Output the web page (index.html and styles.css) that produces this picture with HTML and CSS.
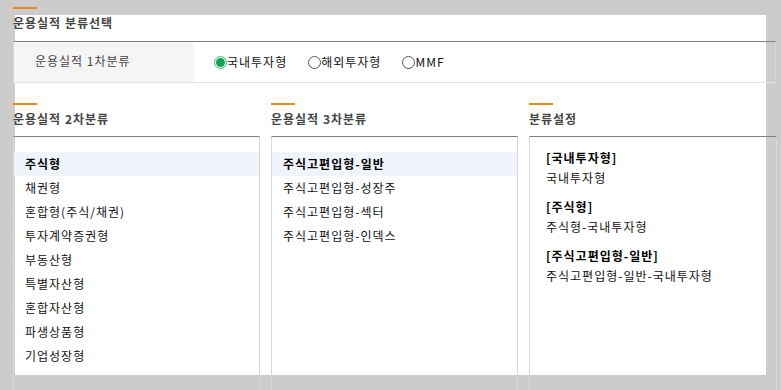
FILE: index.html
```html
<!DOCTYPE html>
<html>
<head lang="ko">
    <meta charset="UTF-8">
    <title>운용실적 분류선택</title>
    <link rel="stylesheet" href="styles.css">
</head>
<body>
<div class="wrap">
    <div class="sec sec_top">
        <div class="bar"></div>
        <h2 class="tit">운용실적 분류선택</h2>
        <div class="row">
            <div class="th">운용실적 1차분류</div>
            <div class="td">
                <label class="rd on"><span class="dot"></span>국내투자형</label>
                <label class="rd"><span class="dot"></span>해외투자형</label>
                <label class="rd"><span class="dot"></span>MMF</label>
            </div>
        </div>
    </div>

    <div class="cols">
        <div class="sec">
            <div class="bar"></div>
            <h2 class="tit">운용실적 2차분류</h2>
            <ul class="list">
                <li class="on">주식형</li>
                <li>채권형</li>
                <li>혼합형(주식/채권)</li>
                <li>투자계약증권형</li>
                <li>부동산형</li>
                <li>특별자산형</li>
                <li>혼합자산형</li>
                <li>파생상품형</li>
                <li>기업성장형</li>
            </ul>
        </div>
        <div class="sec">
            <div class="bar"></div>
            <h2 class="tit">운용실적 3차분류</h2>
            <ul class="list">
                <li class="on">주식고편입형-일반</li>
                <li>주식고편입형-성장주</li>
                <li>주식고편입형-섹터</li>
                <li>주식고편입형-인덱스</li>
            </ul>
        </div>
        <div class="sec">
            <div class="bar"></div>
            <h2 class="tit">분류설정</h2>
            <div class="setting">
                <dl>
                    <dt>[국내투자형]</dt>
                    <dd>국내투자형</dd>
                </dl>
                <dl>
                    <dt>[주식형]</dt>
                    <dd>주식형-국내투자형</dd>
                </dl>
                <dl>
                    <dt>[주식고편입형-일반]</dt>
                    <dd>주식고편입형-일반-국내투자형</dd>
                </dl>
            </div>
        </div>
    </div>
</div>
</body>
</html>
```

FILE: styles.css
```css
*{margin: 0; padding: 0; box-sizing: border-box}
ul{list-style: none}

html, body{
    height: 100%;
    overflow: hidden;
}
body{
    background: linear-gradient(#ffffff, #ffffff) 15px 15px / 751px 360px no-repeat, #cccccc;
    font-family: "Noto Sans CJK KR", "Noto Sans", sans-serif;
    font-size: 12px;
    letter-spacing: 1px;
    color: #111;
}
.wrap{
    width: 763px;
    margin-left: 13px;
    padding-top: 7px;
}

/* 섹션 제목 */
.bar{
    width: 24px;
    height: 2px;
    background: #ee8a1c;
}
.tit{
    padding-top: 6px;
    line-height: 16px;
    margin-bottom: 9px;
    font-size: 12px;
    font-weight: bold;
    color: #444;
}
.sec_top .tit{
    margin-bottom: 10px;
}

/* 1차분류 */
.row{
    display: flex;
    height: 42px;
    border: 1px solid #d6d6d6;
    border-top-color: #808080;
    border-bottom-color: #e2e2e2;
}
.th{
    width: 180px;
    padding-left: 21px;
    line-height: 38px;
    background: #f5f5f5;
    color: #444;
}
.td{
    display: flex;
    align-items: center;
    gap: 21px;
    padding-left: 20px;
}
.rd{
    display: flex;
    align-items: center;
    line-height: 16px;
    color: #111;
}
.dot{
    width: 13px;
    height: 13px;
    border: 1px solid #555;
    border-radius: 50%;
    background: #fff;
    display: flex;
    align-items: center;
    justify-content: center;
}
.rd.on .dot{
    border: 1px solid #3dbb7a;
}
.rd.on .dot:after{
    content: '';
    width: 9px;
    height: 9px;
    border-radius: 50%;
    background: #12a356;
}

/* 2차, 3차, 설정 */
.cols{
    display: grid;
    grid-template-columns: 247px 247px 248px;
    column-gap: 11px;
    margin-top: 20px;
}
.list, .setting{
    height: 270px;
    border: 1px solid #d8d8d8;
    border-top-color: #808080;
}
.list{
    padding-top: 15px;
}
.list li{
    height: 24px;
    line-height: 24px;
    padding-left: 11px;
    color: #111;
}
.list li.on{
    background: #f0f5fd;
    font-weight: bold;
    color: #000;
}
.setting{
    padding: 11px 16px 0;
}
.setting dl{
    margin-bottom: 9px;
    line-height: 20px;
}
.setting dt{
    font-weight: bold;
    color: #000;
}
.setting dd{
    color: #111;
}
```
